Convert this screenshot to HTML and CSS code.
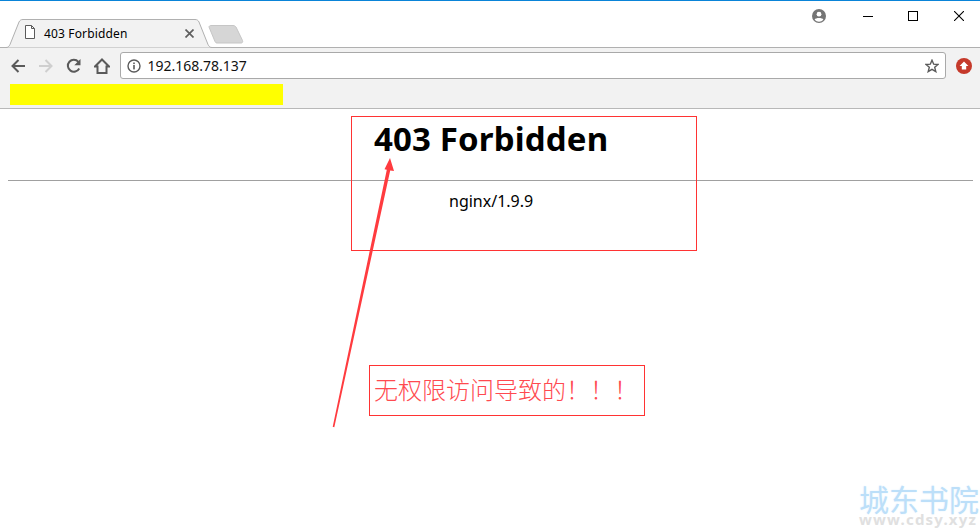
FILE: index.html
```html
<!DOCTYPE html>
<html lang="en">

<head>
    <meta charset="UTF-8">
    <meta name="viewport" content="width=device-width, initial-scale=1.0">
    <title>403 Forbidden</title>
    <link rel="stylesheet" href="styles.css">
</head>

<body>
    <div class="browser">
        <!-- tab strip -->
        <div class="tabstrip">
            <div class="tab">
                <svg class="tab-shape" width="208" height="29" viewBox="0 0 208 29">
                    <path d="M0,28.5 L1,28.5 C3,28.5 4,27.5 5,25.5 L14,3 C15,1.2 16,0.5 18,0.5 L190,0.5 C192,0.5 193,1.2 194,3 L203,25.5 C204,27.5 205,28.5 207,28.5 L208,28.5" fill="#f2f2f2" stroke="#b0b0b0"></path>
                </svg>
                <svg class="tab-file" width="12" height="15" viewBox="0 0 12 15">
                    <path d="M1.5,0.5 H7.5 L10.5,3.5 V13.5 H1.5 Z M7.5,0.5 V3.5 H10.5" fill="#fff" stroke="#5a5a5a"></path>
                </svg>
                <span class="tab-title">403 Forbidden</span>
                <svg class="tab-close" width="9" height="9" viewBox="0 0 9 9">
                    <path d="M0.5,0.5 L8.5,8.5 M8.5,0.5 L0.5,8.5" stroke="#5f5f5f" stroke-width="1.7"></path>
                </svg>
            </div>
            <svg class="newtab" width="36" height="19" viewBox="0 0 36 19">
                <path d="M1,2 C1,1 2,0.5 3,0.5 L25,0.5 C26.5,0.5 27,1 28,2 L34.5,15.5 C35,17 34.5,18 33,18 L9,18 C8,18 7.5,17.5 7,16.5 Z" fill="#d6d6d6" stroke="#c6c6c6"></path>
            </svg>
            <div class="window-btns">
                <svg class="profile" width="14" height="14" viewBox="0 0 14 14">
                    <circle cx="7" cy="7" r="7" fill="#757575"></circle>
                    <circle cx="7" cy="5.2" r="2.4" fill="#fff"></circle>
                    <path d="M2.6,10.6 C3.6,8.6 10.4,8.6 11.4,10.6 C10.2,12.2 8.6,12.8 7,12.8 C5.4,12.8 3.8,12.2 2.6,10.6 Z" fill="#fff"></path>
                </svg>
                <svg class="win-min" width="10" height="10" viewBox="0 0 10 10">
                    <path d="M0,5.5 H10" stroke="#000"></path>
                </svg>
                <svg class="win-max" width="10" height="10" viewBox="0 0 10 10">
                    <rect x="0.5" y="0.5" width="9" height="9" fill="none" stroke="#000"></rect>
                </svg>
                <svg class="win-close" width="10" height="10" viewBox="0 0 10 10">
                    <path d="M0,0 L10,10 M10,0 L0,10" stroke="#000" stroke-width="1.1"></path>
                </svg>
            </div>
        </div>

        <!-- toolbar -->
        <div class="toolbar">
            <svg class="nav-icon" width="16" height="16" viewBox="0 0 16 16">
                <path d="M15,8 H3 M8.5,2 L2.5,8 L8.5,14" fill="none" stroke="#5a5a5a" stroke-width="2"></path>
            </svg>
            <svg class="nav-icon" width="16" height="16" viewBox="0 0 16 16">
                <path d="M1,8 H13 M7.5,2 L13.5,8 L7.5,14" fill="none" stroke="#cfcfcf" stroke-width="2"></path>
            </svg>
            <svg class="nav-icon" width="16" height="16" viewBox="0 0 16 16">
                <path d="M13.2,10.5 A6,6 0 1 1 12.4,3.8" fill="none" stroke="#5a5a5a" stroke-width="2"></path>
                <path d="M14.5,1 V7.2 H8.3 Z" fill="#5a5a5a"></path>
            </svg>
            <svg class="nav-icon home" width="16" height="16" viewBox="0 0 16 16">
                <path d="M8,1.5 L15,8.5 H12.5 V15 H3.5 V8.5 H1 Z" fill="none" stroke="#5a5a5a" stroke-width="2" stroke-linejoin="miter"></path>
            </svg>
            <div class="omnibox">
                <svg class="info" width="14" height="14" viewBox="0 0 14 14">
                    <circle cx="7" cy="7" r="6" fill="none" stroke="#5a5a5a" stroke-width="1.4"></circle>
                    <rect x="6.2" y="6" width="1.6" height="4.4" fill="#5a5a5a"></rect>
                    <rect x="6.2" y="3.5" width="1.6" height="1.6" fill="#5a5a5a"></rect>
                </svg>
                <span class="url">192.168.78.137</span>
                <svg class="star" width="14" height="14" viewBox="0 0 14 14">
                    <path d="M7,1.2 L8.7,5.2 L13,5.5 L9.7,8.3 L10.8,12.6 L7,10.3 L3.2,12.6 L4.3,8.3 L1,5.5 L5.3,5.2 Z" fill="none" stroke="#5a5a5a" stroke-width="1.4"></path>
                </svg>
            </div>
            <svg class="ext" width="16" height="16" viewBox="0 0 16 16">
                <circle cx="8" cy="8" r="8" fill="#c5392a"></circle>
                <path d="M8,3.4 L12.4,8 H10.2 V11.4 H5.8 V8 H3.6 Z" fill="#fff"></path>
            </svg>
        </div>

        <!-- bookmarks bar -->
        <div class="bookmarks">
            <div class="redacted"></div>
        </div>
    </div>

    <div class="page">
        <h1>403 Forbidden</h1>
        <hr>
        <p class="server">nginx/1.9.9</p>
    </div>

    <!-- annotations drawn over the page -->
    <div class="note note-1"></div>
    <div class="note note-2">无权限访问导致的！！！</div>
    <svg class="arrow" width="980" height="529" viewBox="0 0 980 529">
        <path d="M332.7,426.8 L334.3,427.2 L390.2,170.6 L394,171 L390,158 L384.5,169.2 L386.8,169.8 Z" fill="#ff3b3f"></path>
    </svg>

    <div class="watermark">
        <div class="wm-cn">城东书院</div>
        <div class="wm-en">www.cdsy.xyz</div>
    </div>
</body>

</html>
```

FILE: styles.css
```css
html, body {
    margin: 0;
    padding: 0;
    width: 980px;
    height: 529px;
    overflow: hidden;
    background: #fff;
    font-family: "Noto Sans", "Open Sans", sans-serif;
    color: #000;
}

body {
    position: relative;
}

/* browser chrome */
.browser {
    display: flex;
    flex-direction: column;
}

.tabstrip {
    height: 46px;
    border-top: 1px solid #0a84d8;
    display: flex;
    align-items: flex-end;
    padding-left: 5px;
    background: #fff;
}

.tab {
    position: relative;
    width: 208px;
    height: 29px;
    margin-bottom: -1px;
    display: flex;
    align-items: center;
    padding: 0 0 0 19px;
    box-sizing: border-box;
}

.tab-shape {
    position: absolute;
    top: 0;
    left: 0;
}

.tab-file {
    position: relative;
    margin-bottom: 2px;
}

.tab-title {
    position: relative;
    margin-left: 8px;
    font-size: 12px;
    letter-spacing: 0.15px;
    width: 141px;
    white-space: nowrap;
}

.tab-close {
    position: relative;
}

.newtab {
    margin: 0 0 3px -5px;
}

.window-btns {
    margin-left: auto;
    align-self: flex-start;
    display: flex;
    align-items: center;
    height: 14px;
    margin-top: 8px;
    padding-right: 16px;
}

.win-min {
    margin-left: 37px;
}

.win-max {
    margin-left: 35px;
}

.win-close {
    margin-left: 36px;
}

.toolbar {
    height: 36px;
    box-sizing: border-box;
    display: flex;
    align-items: center;
    background: #f2f2f2;
    border-top: 1px solid #b0b0b0;
    padding-left: 10px;
}

.nav-icon {
    margin-right: 12px;
    flex: none;
}

.nav-icon.home {
    margin-right: 10px;
}

.omnibox {
    width: 826px;
    height: 27px;
    box-sizing: border-box;
    background: #fff;
    border: 1px solid #a9a9a9;
    border-radius: 3px;
    display: flex;
    align-items: center;
    padding: 0 6px;
}

.info {
    flex: none;
}

.url {
    margin-left: 6.5px;
    font-size: 14px;
    color: #111;
}

.star {
    margin-left: auto;
    flex: none;
}

.ext {
    margin-left: 10px;
    flex: none;
}

.bookmarks {
    height: 26px;
    box-sizing: border-box;
    background: #f2f2f2;
    border-bottom: 1px solid #b8b8b8;
    padding: 1px 0 0 10px;
}

.redacted {
    width: 273px;
    height: 21px;
    background: #ffff00;
}

/* nginx error page */
.page {
    padding: 8px 7px 0 8px;
}

h1 {
    margin: 0 0 0 366px;
    font-size: 33px;
    letter-spacing: 0.15px;
    line-height: 44px;
    font-weight: 700;
}

hr {
    margin: 19px 0 0;
    height: 1px;
    border: none;
    background: #a0a0a0;
}

.server {
    margin: 9px 0 0 441px;
    font-size: 16px;
    line-height: 22px;
}

/* annotations */
.note {
    position: absolute;
    box-sizing: border-box;
    border: 1px solid #f33;
}

.note-1 {
    left: 351px;
    top: 116px;
    width: 346px;
    height: 135px;
}

.note-2 {
    left: 369px;
    top: 365px;
    width: 276px;
    height: 51px;
    padding-left: 4px;
    font-family: "Noto Sans CJK SC", sans-serif;
    font-weight: 300;
    font-size: 24px;
    line-height: 46px;
    color: #ff4a50;
    white-space: nowrap;
}

.arrow {
    position: absolute;
    left: 0;
    top: 0;
}

.watermark {
    position: absolute;
    left: 859px;
    top: 483px;
    width: 121px;
    white-space: nowrap;
}

.wm-cn {
    font-family: "Noto Sans CJK SC", sans-serif;
    font-size: 30px;
    line-height: 30px;
    color: #bcdff9;
    text-shadow: 0 0 2px #e4f2fd;
}

.wm-en {
    margin-top: -1px;
    font-size: 15px;
    line-height: 15px;
    font-weight: 700;
    color: #e0e0e0;
    letter-spacing: 1.2px;
}
```
